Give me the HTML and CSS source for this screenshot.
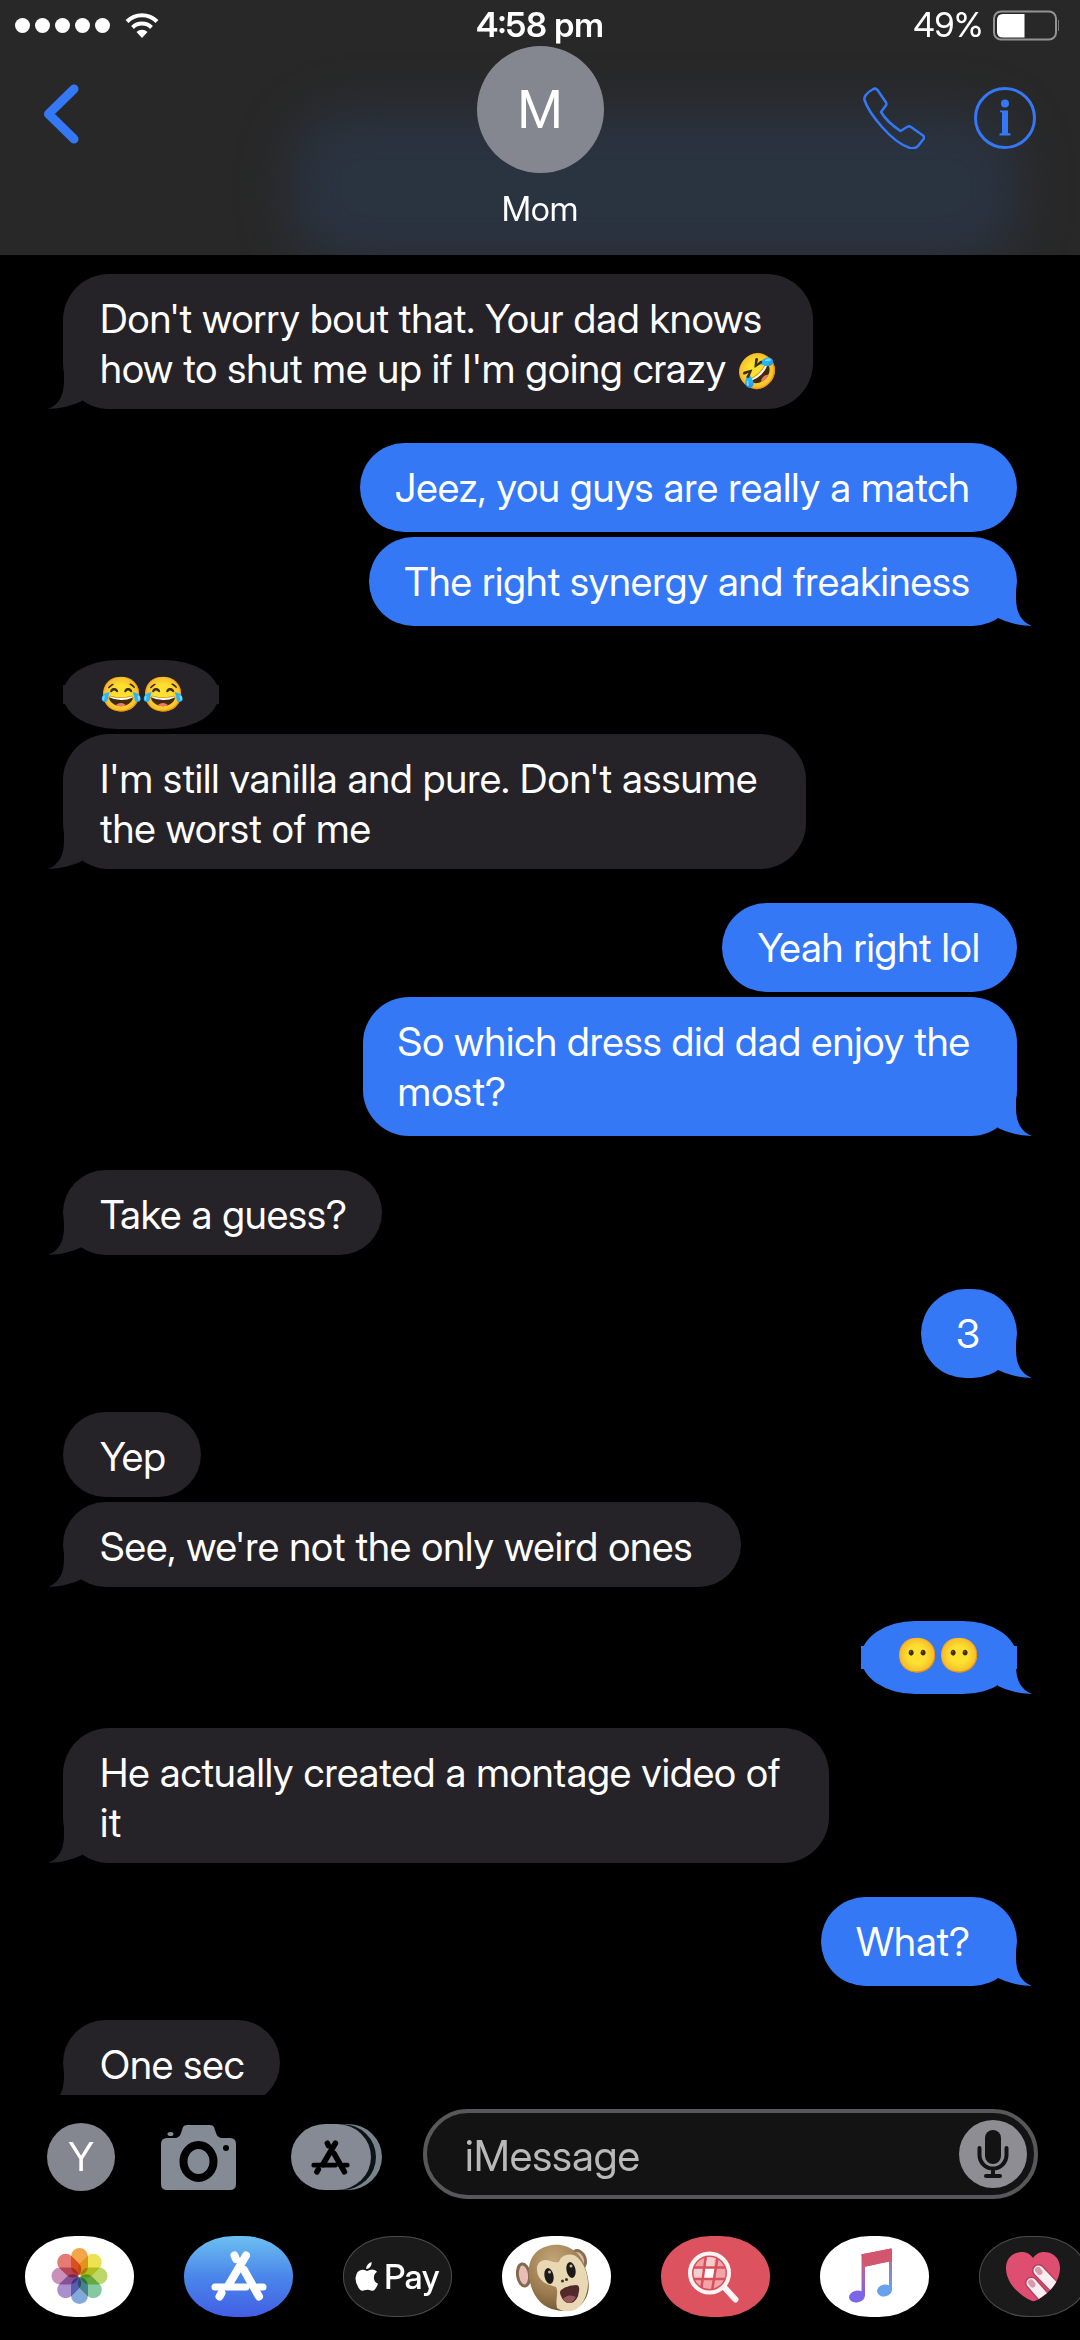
FILE: index.html
```html
<!DOCTYPE html>
<html lang="en">
<head>
<meta charset="utf-8">
<meta name="viewport" content="width=device-width, initial-scale=1">
<title>Mom</title>
<link rel="stylesheet" href="styles.css">
</head>
<body>
<svg class="defs" aria-hidden="true">
  <symbol id="store-glyph" viewBox="0 0 56 50">
    <g fill="none" stroke="currentColor" stroke-linecap="round">
      <path stroke-width="8" d="M35 4.500 17 35"/>
      <path stroke-width="8" d="M23.500 4.500 25 8"/>
      <path stroke-width="8" d="M33 19 48 45.500"/>
      <path stroke-width="7" d="M4 36H35M47 36H52"/>
      <path stroke-width="8" d="M10.500 42 8.500 45.500"/>
    </g>
  </symbol>
</svg>

<header class="header">
  <div class="status">
    <div class="status__left">
      <span class="signal" role="img" aria-label="Full signal"><i></i><i></i><i></i><i></i><i></i></span>
      <svg class="wifi" viewBox="0 0 34 26" aria-hidden="true">
        <path d="M2 9.500A21 21 0 0 1 32 9.500" fill="none" stroke="#fff" stroke-width="4"/>
        <path d="M7.500 15.500A13.500 13.500 0 0 1 26.500 15.500" fill="none" stroke="#fff" stroke-width="4"/>
        <path d="M11.500 20A8 8 0 0 1 22.500 20L17 26Z" fill="#fff"/>
      </svg>
    </div>
    <time class="status__time">4:58 pm</time>
    <div class="status__right">
      <span>49%</span>
      <svg class="battery" viewBox="0 0 67 31" aria-hidden="true">
        <rect x="1" y="1.500" width="62" height="28" rx="7" fill="none" stroke="#939393" stroke-width="2"/>
        <path d="M10 4H31.500V27.500H10Q4 27.500 4 22V10Q4 4 10 4Z" fill="#fff"/>
        <path d="M65.500 10V21" stroke="#777" stroke-width="1"/>
      </svg>
    </div>
  </div>
  <nav class="nav">
    <button class="icon-button nav__back" aria-label="Back">
      <svg width="36" height="60" viewBox="0 0 36 60"><path d="M30 5 4.500 30 30 55" fill="none" stroke="currentColor" stroke-width="9" stroke-linecap="round" stroke-linejoin="round"/></svg>
    </button>
    <div class="contact">
      <div class="avatar avatar--large">M</div>
      <h1 class="contact__name">Mom</h1>
    </div>
    <div class="nav__actions">
      <button class="icon-button" aria-label="Call">
        <svg width="62" height="62" viewBox="0 0 62 62"><path d="M9.500 2.500Q12.500 .5 14.500 3L23 15.500Q24 17.500 22.500 19L18 25Q24 35 37.500 44L44 40Q46 38.500 48 40L60 48.500Q62 50 60.500 52L55 59Q52.500 62 47 61Q34 57 19 40Q5 24 1.500 13Q1 10.500 2.500 8.500Q5.500 4.500 9.500 2.500Z" fill="none" stroke="currentColor" stroke-width="2.500" stroke-linejoin="round"/></svg>
      </button>
      <button class="icon-button" aria-label="Details">
        <svg width="62" height="62" viewBox="0 0 62 62"><circle cx="31" cy="31" r="29.500" fill="none" stroke="currentColor" stroke-width="3"/><circle cx="31" cy="16.500" r="4" fill="currentColor"/><path d="M26 23.500H34V46L36.500 46.500V48.500H25.500V46.500L28 46V25.500L26 25Z" fill="currentColor"/></svg>
      </button>
    </div>
  </nav>
</header>

<main class="thread">
  <section class="group group--in">
    <p class="bubble">Don't worry bout that. Your dad knows<br>how to shut me up if I'm going crazy <span class="emoji">🤣</span></p>
  </section>
  <section class="group group--out">
    <p class="bubble">Jeez, you guys are really a match</p>
    <p class="bubble">The right synergy and freakiness</p>
  </section>
  <section class="group group--in">
    <p class="bubble bubble--emoji"><span class="emoji">😂😂</span></p>
    <p class="bubble bubble--wide">I'm still vanilla and pure. Don't assume<br>the worst of me</p>
  </section>
  <section class="group group--out">
    <p class="bubble bubble--snug">Yeah right lol</p>
    <p class="bubble">So which dress did dad enjoy the<br>most?</p>
  </section>
  <section class="group group--in">
    <p class="bubble">Take a guess?</p>
  </section>
  <section class="group group--out">
    <p class="bubble bubble--snug">3</p>
  </section>
  <section class="group group--in">
    <p class="bubble">Yep</p>
    <p class="bubble bubble--wide">See, we're not the only weird ones</p>
  </section>
  <section class="group group--out">
    <p class="bubble bubble--snug bubble--emoji"><span class="emoji">😶😶</span></p>
  </section>
  <section class="group group--in">
    <p class="bubble bubble--wide">He actually created a montage video of<br>it</p>
  </section>
  <section class="group group--out">
    <p class="bubble">What?</p>
  </section>
  <section class="group group--in">
    <p class="bubble">One sec</p>
  </section>
</main>

<footer class="footer">
  <form class="composer">
    <div class="composer__tools">
      <div class="avatar avatar--small">Y</div>
      <button type="button" class="icon-button composer__camera" aria-label="Camera">
        <svg width="75" height="68" viewBox="0 0 75 68">
          <path fill="#848b95" fill-rule="evenodd" d="M6 15H15Q19 14 20 10L22 4Q23 2 26 2H49Q52 2 53 4L55 10Q56 14 60 15H69Q75 15 75 21V61Q75 67 69 67H6Q0 67 0 61V21Q0 15 6 15Z"/>
          <ellipse cx="9.500" cy="11" rx="3" ry="2" fill="#848b95"/>
          <ellipse cx="37.500" cy="38.500" rx="15" ry="16.500" fill="none" stroke="#000" stroke-width="8"/>
          <circle cx="65" cy="25" r="3" fill="#000"/>
        </svg>
      </button>
      <button type="button" class="icon-button" aria-label="Apps">
        <svg width="91" height="66" viewBox="0 0 91 66">
          <rect x="11" width="80" height="66" rx="34" fill="#78838c"/>
          <rect width="85" height="66" rx="34" fill="#0c1417"/>
          <rect width="80" height="66" rx="34" fill="#868a94"/>
          <use href="#store-glyph" x="20" y="16" width="39" height="35" color="#000"/>
        </svg>
      </button>
    </div>
    <div class="field">
      <input class="field__input" type="text" placeholder="iMessage" aria-label="iMessage">
      <button type="button" class="icon-button" aria-label="Dictate">
        <svg width="68" height="68" viewBox="0 0 68 68">
          <circle cx="34" cy="34" r="34" fill="#8e8d93"/>
          <rect x="26" y="10" width="16" height="34" rx="8" fill="#131313"/>
          <path d="M20.500 28V35A13.500 13.500 0 0 0 47.500 35V28M34 49V56M27 56H41" fill="none" stroke="#131313" stroke-width="4" stroke-linecap="round"/>
        </svg>
      </button>
    </div>
  </form>

  <nav class="apps" aria-label="iMessage apps">
    <button class="app app--white" aria-label="Photos">
      <svg viewBox="0 0 109 81">
        <g transform="translate(54.500 40)" class="petals">
          <rect x="-8.500" y="-28" width="17" height="27" rx="8.500" fill="#f3a64a"/>
          <rect x="-8.500" y="-28" width="17" height="27" rx="8.500" fill="#ebe352" transform="rotate(45)"/>
          <rect x="-8.500" y="-28" width="17" height="27" rx="8.500" fill="#bed768" transform="rotate(90)"/>
          <rect x="-8.500" y="-28" width="17" height="27" rx="8.500" fill="#86c8a0" transform="rotate(135)"/>
          <rect x="-8.500" y="-28" width="17" height="27" rx="8.500" fill="#82a9da" transform="rotate(180)"/>
          <rect x="-8.500" y="-28" width="17" height="27" rx="8.500" fill="#a98fce" transform="rotate(225)"/>
          <rect x="-8.500" y="-28" width="17" height="27" rx="8.500" fill="#ca8fbb" transform="rotate(270)"/>
          <rect x="-8.500" y="-28" width="17" height="27" rx="8.500" fill="#e57b72" transform="rotate(315)"/>
        </g>
      </svg>
    </button>
    <button class="app app--store" aria-label="App Store">
      <svg viewBox="0 0 109 81"><use href="#store-glyph" x="27" y="15" width="56" height="50" color="#fff"/></svg>
    </button>
    <button class="app app--dark app--pay" aria-label="Apple Pay">
      <svg width="24" height="29" viewBox="0 0 24 29"><path fill="#fff" d="M16.500 0Q17 3 15 5.200 13.300 7.200 11.200 7 11 4.600 12.600 2.700 14.200.6 16.500 0ZM22 9.800Q18.800 12 18.900 15.700 19 20 23 21.800 22 24.800 19.900 27.400 18.200 29.200 16 28.400 12.500 27 9.500 28.300 6.800 29.600 4.800 27.400 0 21.800.6 15.400 1.300 8.600 7.400 7.700 9 7.600 12.100 9 16.700 6.600 19.500 8 21 8.600 22 9.800Z"/></svg>
      <span>Pay</span>
    </button>
    <button class="app app--white" aria-label="Animoji">
      <svg viewBox="0 0 109 81">
        <ellipse cx="21.500" cy="39" rx="6" ry="11" fill="#e9bdb6" stroke="#806a50" stroke-width="3" transform="rotate(-8 21.500 39)"/>
        <ellipse cx="77" cy="23" rx="6" ry="9" fill="#dcb9a8" stroke="#86704f" stroke-width="3" transform="rotate(-25 77 23)"/>
        <path d="M50 9C67 7 80 17 84 34C87 44 89 56 82 65C77 73 66 77 54 74C42 72 33 63 29 50C24 34 26 13 50 9Z" fill="url(#fur)"/>
        <path d="M35 34C34 26 42 22 48 25Q53 27 57 26C59 19 68 16 75 21C82 27 85 36 86 46C86 58 82 66 77 71C71 77 60 76 55 72C53 64 57 56 54 51C48 49 36 47 35 34Z" fill="#e8d9b4"/>
        <ellipse cx="47" cy="40" rx="4.500" ry="8" fill="#1c1a18" transform="rotate(-12 47 40)"/>
        <ellipse cx="69" cy="34" rx="4.500" ry="8" fill="#1c1a18" transform="rotate(-12 69 34)"/>
        <circle cx="47.500" cy="36" r="1.500" fill="#bbb"/><circle cx="69" cy="30" r="1.500" fill="#bbb"/>
        <circle cx="60.500" cy="45" r="1.500" fill="#43351f"/><circle cx="64.500" cy="43.500" r="1.500" fill="#43351f"/>
        <path d="M59 54Q66 49 74 49Q78 49 77 55Q76 65 69 67Q62 68 59 60Q57 56 59 54Z" fill="#532a2c"/>
        <path d="M61 63Q66 57 74 61Q71 66 68 67Q64 67 61 63Z" fill="#96595c"/>
        <defs><radialGradient id="fur" cx=".4" cy=".25" r=".8"><stop offset="0" stop-color="#c3a677"/><stop offset=".6" stop-color="#9d7d50"/><stop offset="1" stop-color="#705332"/></radialGradient></defs>
      </svg>
    </button>
    <button class="app app--red" aria-label="Images">
      <svg viewBox="0 0 109 81">
        <path d="M63 51 74.500 63.500" stroke="#fff5f5" stroke-width="6" stroke-linecap="round"/>
        <circle cx="48.500" cy="37" r="18" fill="#f0a3a8"/>
        <path d="M43 31H54L52 43H41Z" fill="#fff"/>
        <path d="M33 33 43 31.500 41 43H31ZM54 20 53 31H44L46 20Z" fill="#f8cdd0"/>
        <path d="M45 19 40 55M57 19 51 55M30 31.500H67M30 43H67" fill="none" stroke="#d94f5c" stroke-width="2.500"/>
        <circle cx="48.500" cy="37" r="17" fill="none" stroke="#d94f5c" stroke-width="2"/>
        <circle cx="48.500" cy="37" r="19.500" fill="none" stroke="#fff5f5" stroke-width="4"/>
      </svg>
    </button>
    <button class="app app--white" aria-label="Music">
      <svg viewBox="0 0 109 81">
        <defs>
          <linearGradient id="note-left" gradientUnits="userSpaceOnUse" x1="0" y1="18" x2="0" y2="66"><stop offset="0" stop-color="#d9566e"/><stop offset=".4" stop-color="#b463a8"/><stop offset="1" stop-color="#7562f0"/></linearGradient>
          <linearGradient id="note-right" gradientUnits="userSpaceOnUse" x1="0" y1="14" x2="0" y2="60"><stop offset="0" stop-color="#d9566e"/><stop offset=".4" stop-color="#8f83c4"/><stop offset="1" stop-color="#62a6f0"/></linearGradient>
        </defs>
        <path d="M41.500 18V60H45V30.500L57 28V15.500L43 18Z" fill="url(#note-left)"/>
        <path d="M56 15.500 71 12.500Q72 12.500 72 13.500V54H69V25.500L56 28Z" fill="url(#note-right)"/>
        <path d="M41.500 19Q41.500 18 43 18L71 12.500Q72 12.500 72 13.500V25L44 31Z" fill="#d2566e"/>
        <ellipse cx="37" cy="60.500" rx="8" ry="6" fill="#7b66ea" transform="rotate(-12 37 60.500)"/>
        <ellipse cx="64.500" cy="54.500" rx="7.500" ry="6" fill="#67a3ea" transform="rotate(-12 64.500 54.500)"/>
      </svg>
    </button>
    <button class="app app--dark" aria-label="Digital Touch">
      <svg viewBox="0 0 109 81">
        <defs><clipPath id="heart"><path d="M54 22C59 15 67 15 73 18C81 22 83 32 79 42C76 51 66 60 57 64.500Q54.500 66 52 64.500C42 60 32 51 29 42C25 32 27 22 35 18C41 15 49 15 54 22Z"/></clipPath></defs>
        <g clip-path="url(#heart)" stroke-linecap="round" fill="none">
          <path d="M20 10H90V70H20Z" fill="#de4e70"/>
          <path d="M59.500 34.500 80 56M52.500 47 70 67" stroke="#b93f5e" stroke-width="13"/>
          <path d="M59.500 34.500 80 56M52.500 47 70 67" stroke="#faeef3" stroke-width="10"/>
          <path d="M59 34 60.500 36M52 46.500 53.500 48.500" stroke="#d89aac" stroke-width="6"/>
        </g>
      </svg>
    </button>
  </nav>
</footer>
</body>
</html>
```
FILE: styles.css
```css
:root {
  --blue: #3478f6;
  --incoming: #252228;
  --gray: #848790;
}

* {
  box-sizing: border-box;
}

body {
  display: flex;
  flex-direction: column;
  height: 100vh;
  margin: 0;
  background: #000;
  color: #fff;
  font-family: "Inter Display", Inter, "Liberation Sans", sans-serif;
  font-size: 40px;
  line-height: 50px;
}

h1,
p {
  margin: 0;
  font-weight: 400;
}

button,
input {
  padding: 0;
  border: 0;
  background: none;
  color: inherit;
  font: inherit;
}

svg {
  display: block;
}

.defs {
  position: absolute;
  width: 0;
  height: 0;
}

.icon-button {
  flex: none;
}

/* Header */

.header {
  position: relative;
  flex: none;
  overflow: hidden;
  padding-bottom: 26px;
  background: #282828;
}

.header::before {
  content: "";
  position: absolute;
  inset: 110px 60px -10px 290px;
  border-radius: 60px;
  background: #2a3340;
  filter: blur(24px);
}

.status,
.nav {
  position: relative;
  display: grid;
  grid-template-columns: 1fr auto 1fr;
}

.status {
  align-items: center;
  height: 46px;
  padding: 4px 15px 0;
  font-size: 34px;
  line-height: 42px;
}

.status__left,
.status__right {
  display: flex;
  align-items: center;
}

.status__left {
  gap: 15px;
}

.status__right {
  justify-content: flex-end;
  gap: 10px;
  padding-right: 5px;
}

.status__time {
  font-weight: 600;
}

.signal {
  display: flex;
  gap: 5px;
}

.signal i {
  width: 15px;
  height: 15px;
  border-radius: 50%;
  background: #fff;
}

.wifi {
  width: 34px;
  height: 26px;
}

.battery {
  width: 67px;
  height: 31px;
}

.nav {
  align-items: start;
  padding: 0 44px;
  color: var(--blue);
}

.nav__back {
  justify-self: start;
  margin-top: 38px;
}

.nav__actions {
  display: flex;
  justify-content: flex-end;
  gap: 49px;
  margin-top: 41px;
}

.contact {
  display: flex;
  flex-direction: column;
  align-items: center;
  gap: 16px;
  color: #fff;
}

.contact__name {
  font-size: 34px;
  line-height: 40px;
}

.avatar {
  display: grid;
  place-items: center;
  border-radius: 50%;
  background: var(--gray);
}

.avatar--large {
  width: 127px;
  height: 127px;
  font-size: 52px;
}

.avatar--small {
  width: 68px;
  height: 68px;
  font-size: 40px;
}

/* Conversation */

.thread {
  flex: 1 1 0;
  display: flex;
  flex-direction: column;
  gap: 34px;
  min-height: 0;
  overflow: hidden;
  padding: 19px 63px 0;
}

.group {
  flex: none;
  display: flex;
  flex-direction: column;
  gap: 5px;
}

.group--in {
  align-items: flex-start;
}

.group--out {
  align-items: flex-end;
}

.bubble {
  position: relative;
  border-radius: 46px;
}

.group--in .bubble {
  padding: 20px 35px 15px 37px;
  background: var(--incoming);
}

.group--out .bubble {
  padding: 20px 47px 19px 35px;
  background: var(--blue);
}

.group--in .bubble--wide {
  padding-right: 49px;
}

.group--out .bubble--snug {
  padding-right: 37px;
  padding-left: 35px;
}

.emoji {
  font-size: 34px;
  line-height: 34px;
}

.bubble--emoji {
  border-radius: 54px / 50%;
  line-height: 34px;
}

.group--in .bubble--emoji {
  padding-top: 17px;
  padding-bottom: 18px;
}

.group--out .bubble--emoji {
  padding-top: 17px;
  padding-bottom: 22px;
}

.bubble--emoji .emoji {
  display: block;
}

/* Square shoulders at the widest point of the short bubbles */
.bubble--emoji::before {
  content: "";
  position: absolute;
  z-index: -1;
  inset: 25px 0;
  background: inherit;
}

/* Tail on the last bubble of each group */
.bubble:last-child::after {
  content: "";
  position: absolute;
  bottom: 0;
  width: 36px;
  height: 46px;
  background: inherit;
}

.group--in .bubble:last-child::after {
  left: -15px;
  clip-path: path("M16 0V18Q16 40 0 46Q20 45 34 38L36 0Z");
}

.group--out .bubble:last-child::after {
  right: -15px;
  clip-path: path("M20 0V18Q20 40 36 46Q16 45 2 38L0 0Z");
}

/* Composer */

.footer {
  flex: none;
  padding: 14px 0 23px;
}

.composer {
  display: flex;
  align-items: center;
  gap: 41px;
  padding: 0 42px 0 47px;
}

.composer__tools {
  display: flex;
  align-items: center;
  padding-top: 6px;
}

.composer__camera {
  margin: 0 55px 0 46px;
}

.field {
  flex: 1;
  display: flex;
  align-items: center;
  min-width: 0;
  height: 90px;
  padding: 0 7px 0 38px;
  border: 4px solid #58585a;
  border-radius: 45px;
  background: #131313;
}

.field__input {
  flex: 1;
  min-width: 0;
  padding-top: 4px;
  outline: 0;
  font-size: 42px;
}

.field__input::placeholder {
  color: #b9b9b9;
  opacity: 1;
}

/* App drawer */

.apps {
  display: flex;
  gap: 50px;
  margin-top: 37px;
  padding-left: 25px;
  overflow: hidden;
}

.app {
  flex: none;
  width: 109px;
  height: 81px;
  overflow: hidden;
  border-radius: 50px / 40px;
}

.app--white {
  background: #fff;
}

.app--store {
  background: linear-gradient(#6cc0f1, #4a86ea 50%, #425fe4);
}

.app--dark {
  background: #1a1a1a;
  box-shadow: inset 0 0 0 1px #4a4a4c;
}

.app--red {
  background: #dc525e;
}

.app--pay {
  display: flex;
  align-items: center;
  justify-content: center;
  gap: 5px;
  font-size: 34px;
  font-weight: 500;
}

.petals rect {
  mix-blend-mode: multiply;
}
```
